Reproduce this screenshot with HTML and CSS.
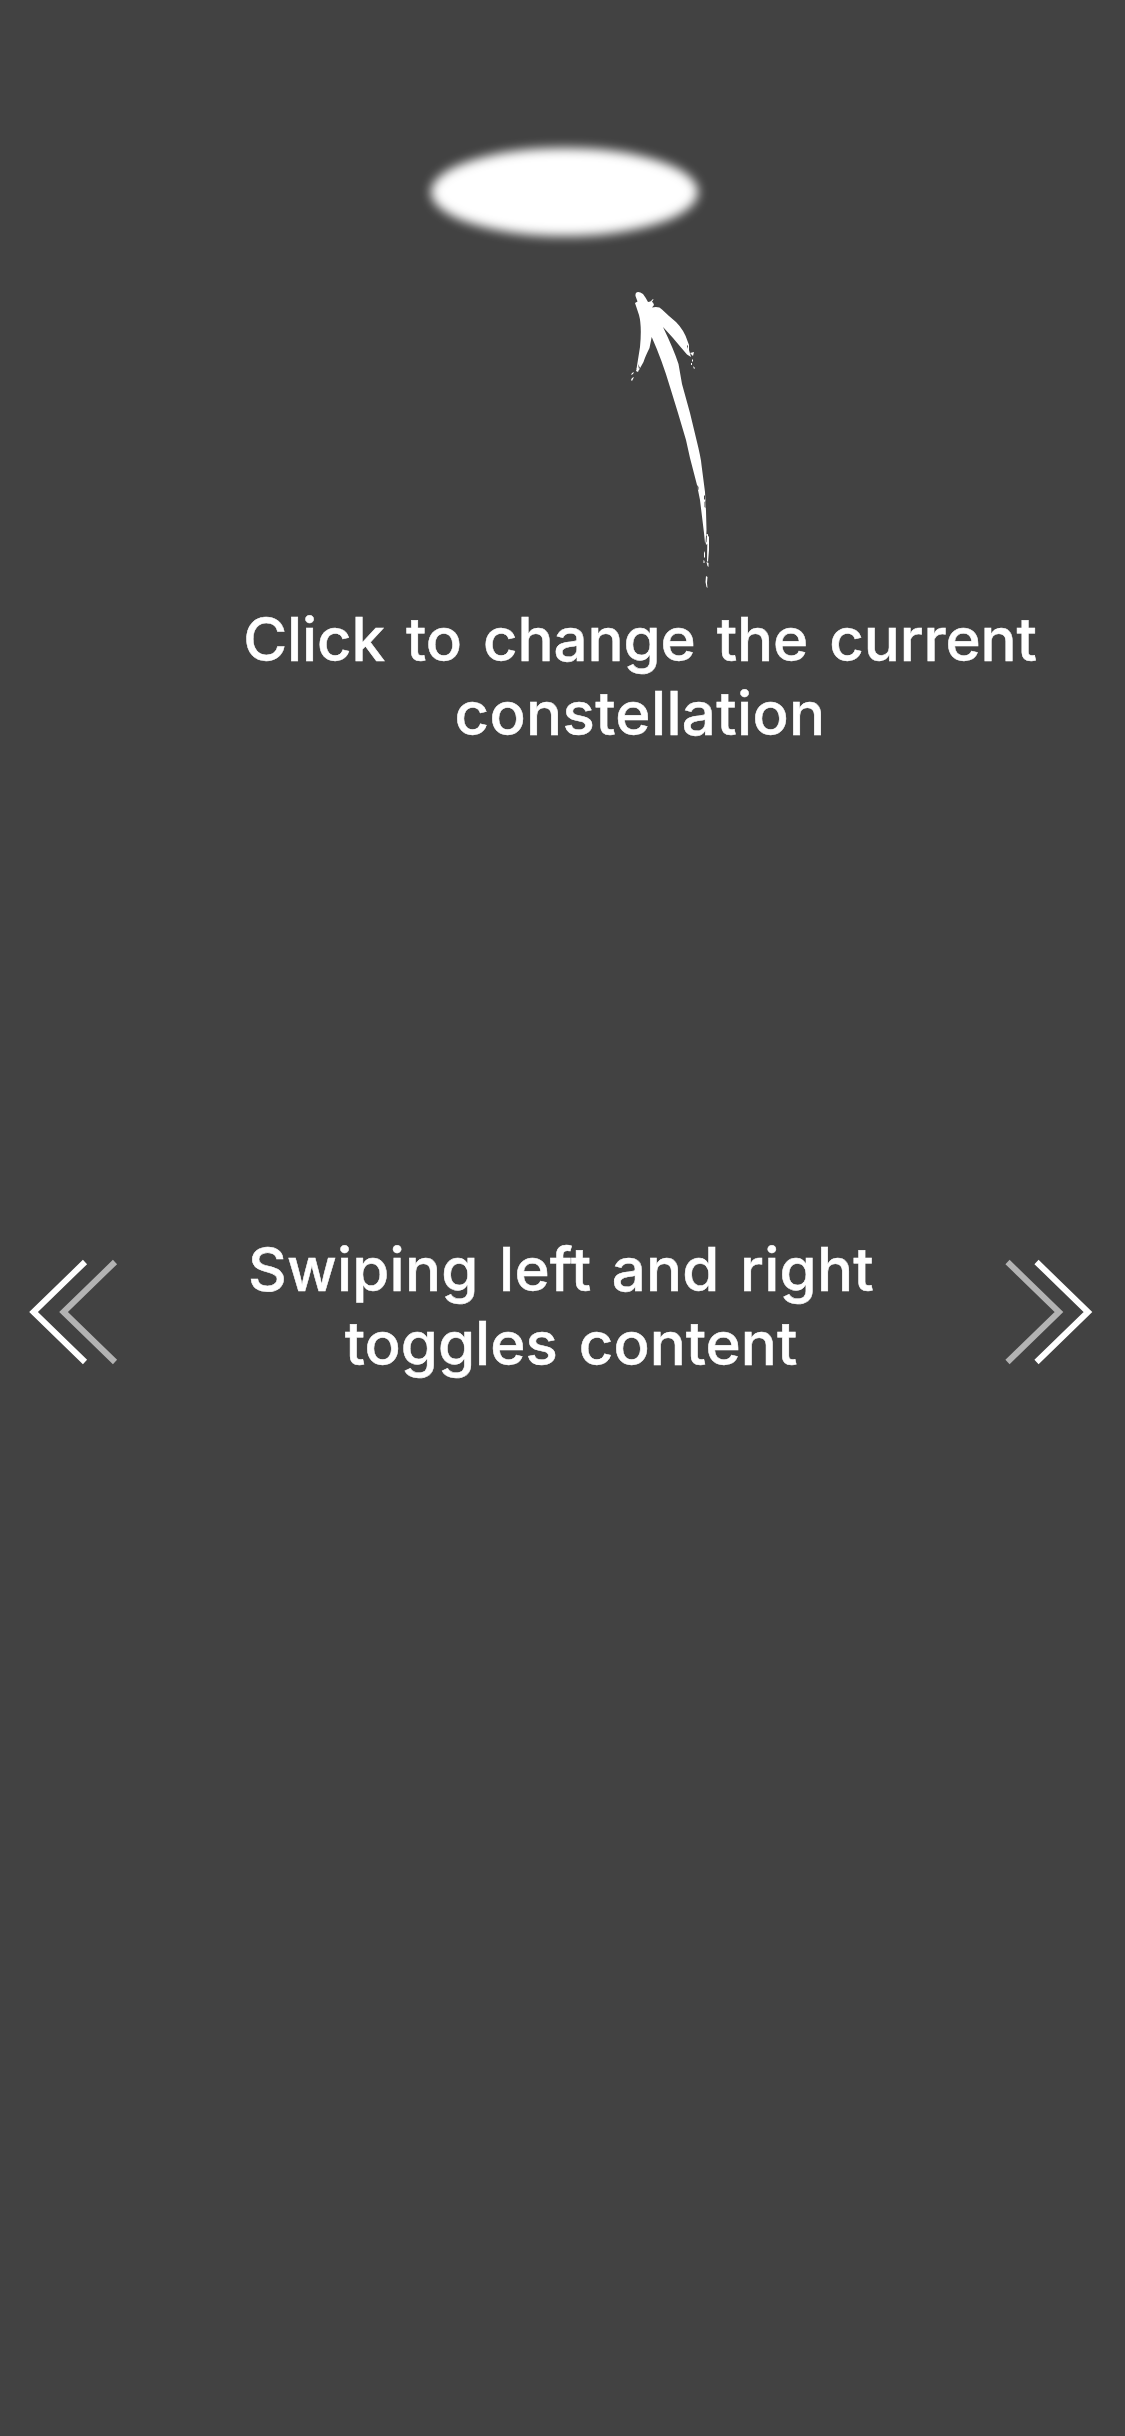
FILE: index.html
```html
<!DOCTYPE html>
<html lang="en">
<head>
<meta charset="utf-8">
<title>Guide</title>
<link rel="stylesheet" href="styles.css">
</head>
<body>
<main class="guide">
  <div class="spotlight"></div>
  <svg class="arrow" viewBox="630 285 90 310" fill="#fff">
    <path d="M635.5 296C635 291 639 291 643 294Q646 298 648 302L650.500 301.500L653 302.500L654 305L652 307.500Q659 306 662 309.500L669 316L676 322Q684 330 687.500 341L689 345L689 350L691 357L687 354.500L681 347.500L673 338L663 327Q674 350 678.500 364L682 384L690 413L696.500 440Q701 458 701.500 465L705 492L706 511L706.500 530L706 542L705 543L704 533L700 500L697 485L690 458L686 440L678 413L670 387Q662 360 651.700 337L649.500 348Q645 357 643.500 362L639 370L636.500 369L640 347Q642 326 639 315L636 306L635 303L637.500 301.500Z"/>
    <path d="M650 302l3-3 .5.5-2 3zM637 368l3-1-2 5-2-1zM632 373l2-1-1 2-2 1zM632 378l2-1-2 4-1-1zM690 353l4-1-1 4zM692 359l1 1v2l-1-1zM693 366l2 2-1 1zM691 363h1v2h-1zM705 535l3-1v9l-2 2zM707.500 535l1.500 2v13l-1 12-1-1 .3-18zM704 551l1 2v5l-1-1zM703.500 560l1 1v2h-1zM706.500 562l2 1v4l-1-1zM706 576l1.500 1-.5 6 .5 5-1-1-1-5z"/>
    <path fill="#424242" d="M697 485l1.500 2v3l-1-1zM704 496l1-1v4l-1 1zM704.500 502l1-1v7l-1-1zM638 364l2 4-1 1zM706 536l1-1-.5 7-1 1zM687 345l1 1-1 3z"/>
  </svg>
  <p class="caption caption-change"><span class="line line-a">Click to change the current</span><span class="line line-b">constellation</span></p>
  <div class="swipe">
    <svg class="chevrons" viewBox="0 0 90 108" fill="none" stroke-width="6">
      <path stroke="#b3b3b3" d="M86 4L34.500 54L86 104"/>
      <path stroke="#fff" d="M56 4L4.500 54L56 104"/>
    </svg>
    <p class="caption"><span class="line line-c">Swiping left and right</span><span class="line line-d">toggles content</span></p>
    <svg class="chevrons" viewBox="0 0 90 108" fill="none" stroke-width="6">
      <path stroke="#b3b3b3" d="M4.500 4L56 54L4.500 104"/>
      <path stroke="#fff" d="M33.500 4L85 54L33.500 104"/>
    </svg>
  </div>
</main>
</body>
</html>
```

FILE: styles.css
```css
body {
  margin: 0;
  background: #424242;
  color: #fff;
  font-family: Inter, "Liberation Sans", sans-serif;
}
.guide {
  display: flex;
  flex-direction: column;
  align-items: center;
  box-sizing: border-box;
  width: 1125px;
  height: 2436px;
  padding-top: 148px;
}
.spotlight {
  flex: none;
  width: 267px;
  height: 88px;
  margin-left: 4px;
  border-radius: 50%;
  background: #fff;
  filter: blur(5.5px);
}
.arrow {
  flex: none;
  width: 90px;
  height: 310px;
  margin-top: 49px;
  margin-left: 225px;
}
.caption {
  margin: 0;
  font-size: 60px;
  font-weight: 500;
  line-height: 74px;
  text-align: center;
  white-space: nowrap;
  -webkit-text-stroke: 0.5px #fff;
}
.caption-change {
  margin-top: 7px;
  margin-left: 155px;
}
.line {
  display: block;
}
.line-a {
  letter-spacing: -0.15px;
  word-spacing: 5.4px;
}
.line-b {
  letter-spacing: 0.35px;
}
.line-c {
  letter-spacing: 0.2px;
  word-spacing: 4.3px;
}
.line-d {
  padding-left: 20px;
  word-spacing: 5px;
}
.swipe {
  display: flex;
  justify-content: space-between;
  align-items: flex-start;
  box-sizing: border-box;
  width: 100%;
  margin-top: 482px;
  padding: 0 32px 0 29px;
}
.chevrons {
  flex: none;
  width: 90px;
  height: 108px;
  margin-top: 26px;
}
```
